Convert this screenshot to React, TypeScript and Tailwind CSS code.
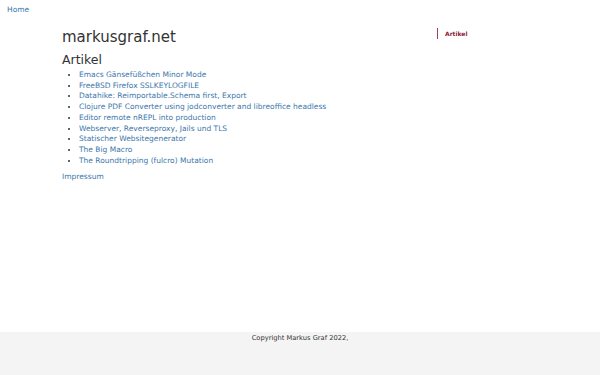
import React from "react";

const items = [
  "Emacs Gänsefüßchen Minor Mode",
  "FreeBSD Firefox SSLKEYLOGFILE",
  "Datahike: Reimportable.Schema first, Export",
  "Clojure PDF Converter using jodconverter and libreoffice headless",
  "Editor remote nREPL into production",
  "Webserver, Reverseproxy, Jails und TLS",
  "Statischer Websitegenerator",
  "The Big Macro",
  "The Roundtripping (fulcro) Mutation",
];

export default function App() {
  return (
    <div
      className="flex h-[375px] flex-col bg-white text-[#333]"
      style={{ fontFamily: '"DejaVu Sans", sans-serif' }}
    >
      <div className="flex-1">
        <div className="px-[7px] pt-[5px] text-[7.5px] leading-[10px]">
          <a className="text-[#3a77ab]">Home</a>
        </div>
        <div className="mx-[62px] flex">
          <div className="flex-1">
            <h1 className="mt-[13px] text-[15px] leading-[18px] text-[#333]">markusgraf.net</h1>
            <h2 className="mt-[6px] text-[12.5px] leading-[15px] text-[#333]">Artikel</h2>
            <ul className="mt-[3px] list-disc pl-[17px] text-[7.5px] leading-[10.7px] marker:text-[#333]">
              {items.map((t) => (
                <li key={t}>
                  <a className="text-[#3a77ab]">{t}</a>
                </li>
              ))}
            </ul>
            <div className="mt-[6px] text-[7.5px] leading-[10px]">
              <a className="text-[#3a77ab]">Impressum</a>
            </div>
          </div>
          <div className="w-[101px] pt-[13px]">
            <div className="border-l-[1.5px] border-[#a04060] pl-[7px] text-[6px] font-bold leading-[11px] text-[#8a1c3c]">
              Artikel
            </div>
          </div>
        </div>
      </div>
      <footer className="h-[43px] bg-[#f4f4f4] pt-[1px] text-center text-[6.7px] leading-[10px] text-[#333]">
        Copyright Markus Graf 2022,
      </footer>
    </div>
  );
}
